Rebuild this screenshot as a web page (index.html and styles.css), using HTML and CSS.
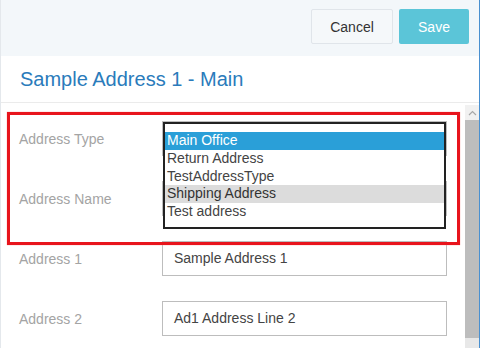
FILE: index.html
```html
<!DOCTYPE html>
<html lang="en">
<head>
    <meta charset="UTF-8">
    <meta name="viewport" content="width=device-width, initial-scale=1.0">
    <title>Edit Address</title>
    <link rel="stylesheet" href="styles.css">
</head>
<body>
    <div class="frame">
        <div class="header">
            <button type="button" class="btn btn-cancel">Cancel</button>
            <button type="button" class="btn btn-save">Save</button>
        </div>
        <div class="title-bar">
            <h2>Sample Address 1 - Main</h2>
        </div>
        <div class="body-row">
            <div class="content">
                <form class="address-form">
                    <div class="form-group">
                        <label>Address Type</label>
                        <div class="field"></div>
                    </div>
                    <div class="form-group">
                        <label>Address Name</label>
                        <div class="field"></div>
                    </div>
                    <div class="form-group">
                        <label>Address 1</label>
                        <div class="field">Sample Address 1</div>
                    </div>
                    <div class="form-group">
                        <label>Address 2</label>
                        <div class="field">Ad1 Address Line 2</div>
                    </div>
                </form>

                <!-- open list of the Address Type select -->
                <ul class="dropdown">
                    <li class="selected">Main Office</li>
                    <li>Return Address</li>
                    <li>TestAddressType</li>
                    <li class="hover">Shipping Address</li>
                    <li>Test address</li>
                </ul>

                <div class="highlight-box"></div>
            </div>
            <div class="scrollbar">
                <div class="arrow-up">
                    <svg width="9" height="6" viewBox="0 0 9 6"><path d="M1 5 L4.5 1.5 L8 5" fill="none" stroke="#a8a8a8" stroke-width="1.2"/></svg>
                </div>
                <div class="thumb"></div>
                <div class="track-end"></div>
            </div>
        </div>
    </div>
</body>
</html>
```

FILE: styles.css
```css
body { margin: 0; font-family: "Liberation Sans", Arial, sans-serif; }
.frame { width: 480px; height: 348px; box-sizing: border-box; border-left: 1px solid #e4e8ec; border-right: 1px solid #4a90d0; overflow: hidden; display: flex; flex-direction: column; }

.header { height: 56px; background-color: #f3f7fa; display: flex; justify-content: flex-end; align-items: flex-start; gap: 6px; padding: 9px 10px 0 0; box-sizing: border-box; flex-shrink: 0; }
.btn { height: 35px; font-family: inherit; font-size: 14px; border-radius: 2px; cursor: pointer; padding: 0; }
.btn-cancel { width: 82px; background-color: #f5f8fa; color: #333; border: 1px solid #e0e5ea; }
.btn-save { width: 70px; background-color: #5bc5d8; color: #fff; border: none; }

.title-bar { height: 47px; border-bottom: 1px solid #ebebeb; box-sizing: border-box; padding-left: 19px; flex-shrink: 0; }
.title-bar h2 { margin: 0; font-weight: normal; font-size: 20px; line-height: 46px; color: #2a7bbb; }

.body-row { flex: 1; display: flex; padding-top: 2px; }
.content { flex: 1; position: relative; }

.address-form { padding: 16px 0 0 18px; }
.form-group { display: flex; align-items: center; margin-bottom: 25px; }
.form-group label { width: 143px; font-size: 14px; color: #a4a4a4; }
.field { width: 285px; height: 35px; box-sizing: border-box; border: 1px solid #bdbdbd; font-size: 14px; color: #444; line-height: 33px; padding-left: 11px; }

.dropdown { position: absolute; left: 162px; top: 17px; width: 283px; height: 107px; box-sizing: border-box; margin: 0; padding: 8px 0 0; list-style: none; background-color: #fff; border: 2px solid #222; }
.dropdown li { font-size: 14px; line-height: 17.8px; height: 17.8px; padding-left: 2px; color: #444; }
.dropdown li.selected { background-color: #2a9fd8; color: #fff; }
.dropdown li.hover { background-color: #dcdcdc; color: #333; }

.highlight-box { position: absolute; left: 6px; top: 7px; width: 453px; height: 133px; box-sizing: border-box; border: 3px solid #e8141c; box-shadow: 0 0 1px #f58a8a; }

.scrollbar { width: 14px; display: flex; flex-direction: column; }
.arrow-up { height: 15px; background-color: #f1f1f1; display: flex; align-items: center; justify-content: center; }
.thumb { height: 218px; background-color: #bdbdbd; }
.track-end { flex: 1; background-color: #e8e8e8; }
```
